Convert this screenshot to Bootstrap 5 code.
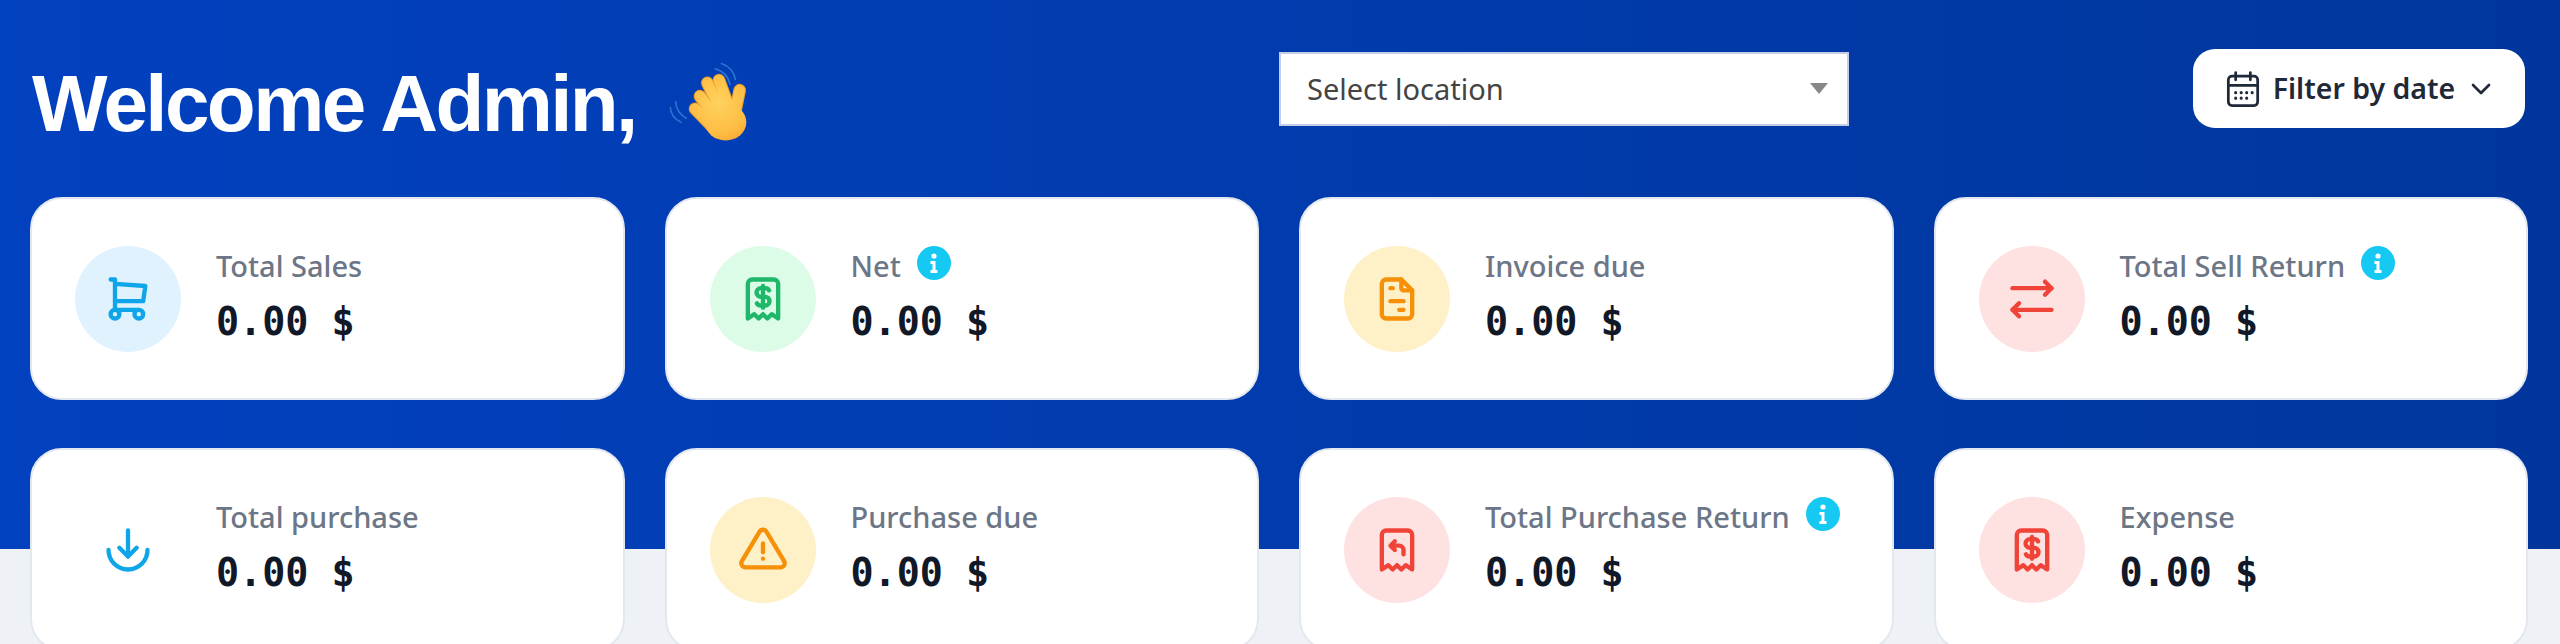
<!DOCTYPE html>
<html lang="en">
<head>
<meta charset="utf-8">
<title>Dashboard</title>
<link href="https://cdn.jsdelivr.net/npm/bootstrap@5.3.0/dist/css/bootstrap.min.css" rel="stylesheet">
<style>
html,body{height:644px;overflow:hidden}
body{background:#eef1f6;font-family:"Noto Sans",sans-serif}
.hero{height:549px;background:linear-gradient(to right,#0241bf,#00369c);padding:49px 32px 0 30px}
.top-bar{height:79px;padding-right:3px}
.welcome{width:1249px;margin-top:15px;padding-left:2px}
.welcome h1{font-family:"Liberation Sans",sans-serif;font-weight:700;font-size:80px;letter-spacing:-2.6px;line-height:1;color:#fff;margin:0}
.wave{width:80px;height:82px;margin-left:32px;margin-top:-4px}
.loc-select{width:570px;height:74px;border-radius:0;border:2px solid #c3cde6;background-color:#fff;font-size:29px;color:#444;padding:0 26px;box-shadow:none;
background-image:url("data:image/svg+xml,%3Csvg xmlns='http://www.w3.org/2000/svg' viewBox='0 0 18 11'%3E%3Cpath fill='%23888' d='M0 0h18L9 11z'/%3E%3C/svg%3E");background-size:18px 11px;background-position:right 19px center}
.date-btn{width:332px;height:79px;background:#fff;border:0;border-radius:22px;font-size:28.5px;font-weight:600;color:#1f2937;padding:0}
.date-btn .cal{width:44px;height:44px;margin-right:8px}
.date-btn .chev{width:32px;height:32px;margin-left:10px}
.stats{display:grid;grid-template-columns:repeat(4,1fr);column-gap:40px;row-gap:48px;margin-top:69px}
.stat{height:203px;background:#fff;border:2px solid #e3e7f0;border-radius:32px;padding:0 43px;gap:35px}
.disc{width:106px;height:106px;flex:none;border-radius:50%}
.disc svg{width:52px;height:52px;fill:none;stroke:currentColor;stroke-width:2;stroke-linecap:round;stroke-linejoin:round}
.tone-sky{background:#e0f2fe;color:#0ea5e9}
.tone-green{background:#dcfce7;color:#1fb86a}
.tone-amber{background:#fef0c7;color:#f79009}
.tone-red{background:#fee2e2;color:#f04438}
.tone-plain{background:#fff;color:#0ea5e9}
.copy{padding-bottom:5px}
.lbl{font-size:29px;line-height:40px;color:#6c7686;font-weight:500;gap:16px}
.lbl svg{width:34px;height:34px;flex:none;margin-top:-6px}
.val{font-family:"DejaVu Sans Mono",monospace;font-weight:700;font-size:38.4px;line-height:48px;color:#111827;margin-top:12px}
</style>
</head>
<body>
<svg width="0" height="0" class="position-absolute">
  <defs>
    <symbol id="ic-info" viewBox="0 0 34 34"><circle cx="17" cy="17" r="17" fill="#16c9f2"/><circle cx="17" cy="10" r="2.6" fill="#fff"/><path d="M13.5 15h5v9h2v3h-7v-3h2v-6h-2z" fill="#fff"/></symbol>
    <radialGradient id="hand" gradientUnits="userSpaceOnUse" cx="235" cy="190" r="135"><stop offset="0" stop-color="#ffd35e"/><stop offset=".7" stop-color="#fdbb42"/><stop offset="1" stop-color="#f7a02a"/></radialGradient>
  </defs>
</svg>
<div class="hero">
  <div class="top-bar d-flex align-items-start">
    <div class="welcome d-flex align-items-center">
      <h1>Welcome Admin,</h1>
      <svg class="wave" viewBox="85 65 240 245" aria-hidden="true">
        <g fill="none" stroke="#2f7fd6" stroke-width="5" stroke-linecap="round" opacity=".85">
          <path d="M245 72q36 12 42 48"/><path d="M227 88q36 10 44 46"/>
          <path d="M108 186q2 34 32 50"/><path d="M92 204q2 30 32 44"/>
        </g>
        <g fill="none" stroke-linecap="round">
          <g stroke="#eb9a28" stroke-width="38">
            <path d="M166 208L215 258"/><path d="M181 170L232 240"/><path d="M203 130L250 225"/><path d="M238 122L272 215"/><path d="M300 152L285 225"/>
          </g>
          <g stroke="url(#hand)" stroke-width="32">
            <path d="M166 208L215 258"/><path d="M181 170L232 240"/><path d="M203 130L250 225"/><path d="M238 122L272 215"/><path d="M300 152L285 225"/>
          </g>
        </g>
        <ellipse cx="258" cy="248" rx="62" ry="55" fill="url(#hand)"/>
      </svg>
    </div>
    <select class="form-select loc-select mt-auto mb-auto" aria-label="Location">
      <option selected>Select location</option>
    </select>
    <button type="button" class="btn date-btn ms-auto d-flex align-items-center justify-content-center">
      <svg class="cal" viewBox="0 0 24 24" fill="none" stroke="currentColor" stroke-width="1.5" stroke-linecap="round" stroke-linejoin="round"><rect x="4" y="5" width="16" height="16" rx="2"/><path d="M16 3v4M8 3v4M4 10h16"/><path d="M8 14h.01M11 14h.01M14 14h.01M17 14h.01M8 17h.01M11 17h.01M14 17h.01" stroke-width="1.7"/></svg>
      <span>Filter by date</span>
      <svg class="chev" viewBox="0 0 24 24" fill="none" stroke="currentColor" stroke-width="2" stroke-linecap="round" stroke-linejoin="round"><path d="M6 9l6 6l6-6"/></svg>
    </button>
  </div>
  <div class="stats">
    <div class="stat d-flex align-items-center">
      <div class="disc tone-sky d-flex align-items-center justify-content-center"><svg viewBox="0 0 24 24"><circle cx="6" cy="19" r="2"/><circle cx="17" cy="19" r="2"/><path d="M17 17h-11v-14h-2"/><path d="M6 5l14 1l-1 7h-13"/></svg></div>
      <div class="copy"><div class="lbl d-flex align-items-center">Total Sales</div><div class="val">0.00 $</div></div>
    </div>
    <div class="stat d-flex align-items-center">
      <div class="disc tone-green d-flex align-items-center justify-content-center"><svg viewBox="0 0 24 24"><path d="M5 21v-16a2 2 0 0 1 2 -2h10a2 2 0 0 1 2 2v16l-3 -2l-2 2l-2 -2l-2 2l-2 -2l-3 2"/><path d="M14.8 8a2 2 0 0 0 -1.8 -1h-2a2 2 0 1 0 0 4h2a2 2 0 1 1 0 4h-2a2 2 0 0 1 -1.8 -1"/><path d="M12 6v10"/></svg></div>
      <div class="copy"><div class="lbl d-flex align-items-center">Net<svg><use href="#ic-info"/></svg></div><div class="val">0.00 $</div></div>
    </div>
    <div class="stat d-flex align-items-center">
      <div class="disc tone-amber d-flex align-items-center justify-content-center"><svg viewBox="0 0 24 24"><path d="M14 3v4a1 1 0 0 0 1 1h4"/><path d="M17 21h-10a2 2 0 0 1 -2 -2v-14a2 2 0 0 1 2 -2h7l5 5v11a2 2 0 0 1 -2 2z"/><path d="M9 7h1"/><path d="M9 13h6"/><path d="M13 17h2"/></svg></div>
      <div class="copy"><div class="lbl d-flex align-items-center">Invoice due</div><div class="val">0.00 $</div></div>
    </div>
    <div class="stat d-flex align-items-center">
      <div class="disc tone-red d-flex align-items-center justify-content-center"><svg viewBox="0 0 24 24"><path d="M3 7h18"/><path d="M18 4l3 3l-3 3"/><path d="M21 17h-18"/><path d="M6 14l-3 3l3 3"/></svg></div>
      <div class="copy"><div class="lbl d-flex align-items-center">Total Sell Return<svg><use href="#ic-info"/></svg></div><div class="val">0.00 $</div></div>
    </div>
    <div class="stat d-flex align-items-center">
      <div class="disc tone-plain d-flex align-items-center justify-content-center"><svg viewBox="0 0 24 24"><path d="M12 3v12"/><path d="M8 11l4 4l4 -4"/><path d="M3 12a9 9 0 0 0 18 0"/></svg></div>
      <div class="copy"><div class="lbl d-flex align-items-center">Total purchase</div><div class="val">0.00 $</div></div>
    </div>
    <div class="stat d-flex align-items-center">
      <div class="disc tone-amber d-flex align-items-center justify-content-center"><svg viewBox="0 0 24 24"><path d="M12 9v4"/><path d="M10.363 3.591l-8.106 13.534a1.914 1.914 0 0 0 1.636 2.871h16.214a1.914 1.914 0 0 0 1.636 -2.87l-8.106 -13.536a1.914 1.914 0 0 0 -3.274 0z"/><path d="M12 16h.01"/></svg></div>
      <div class="copy"><div class="lbl d-flex align-items-center">Purchase due</div><div class="val">0.00 $</div></div>
    </div>
    <div class="stat d-flex align-items-center">
      <div class="disc tone-red d-flex align-items-center justify-content-center"><svg viewBox="0 0 24 24"><path d="M5 21v-16a2 2 0 0 1 2 -2h10a2 2 0 0 1 2 2v16l-3 -2l-2 2l-2 -2l-2 2l-2 -2l-3 2"/><path d="M15 14v-2a2 2 0 0 0 -2 -2h-4l2 -2m0 4l-2 -2"/></svg></div>
      <div class="copy"><div class="lbl d-flex align-items-center">Total Purchase Return<svg><use href="#ic-info"/></svg></div><div class="val">0.00 $</div></div>
    </div>
    <div class="stat d-flex align-items-center">
      <div class="disc tone-red d-flex align-items-center justify-content-center"><svg viewBox="0 0 24 24"><path d="M5 21v-16a2 2 0 0 1 2 -2h10a2 2 0 0 1 2 2v16l-3 -2l-2 2l-2 -2l-2 2l-2 -2l-3 2"/><path d="M14.8 8a2 2 0 0 0 -1.8 -1h-2a2 2 0 1 0 0 4h2a2 2 0 1 1 0 4h-2a2 2 0 0 1 -1.8 -1"/><path d="M12 6v10"/></svg></div>
      <div class="copy"><div class="lbl d-flex align-items-center">Expense</div><div class="val">0.00 $</div></div>
    </div>
  </div>
</div>
<script src="https://cdn.jsdelivr.net/npm/bootstrap@5.3.0/dist/js/bootstrap.bundle.min.js"></script>
</body>
</html>
